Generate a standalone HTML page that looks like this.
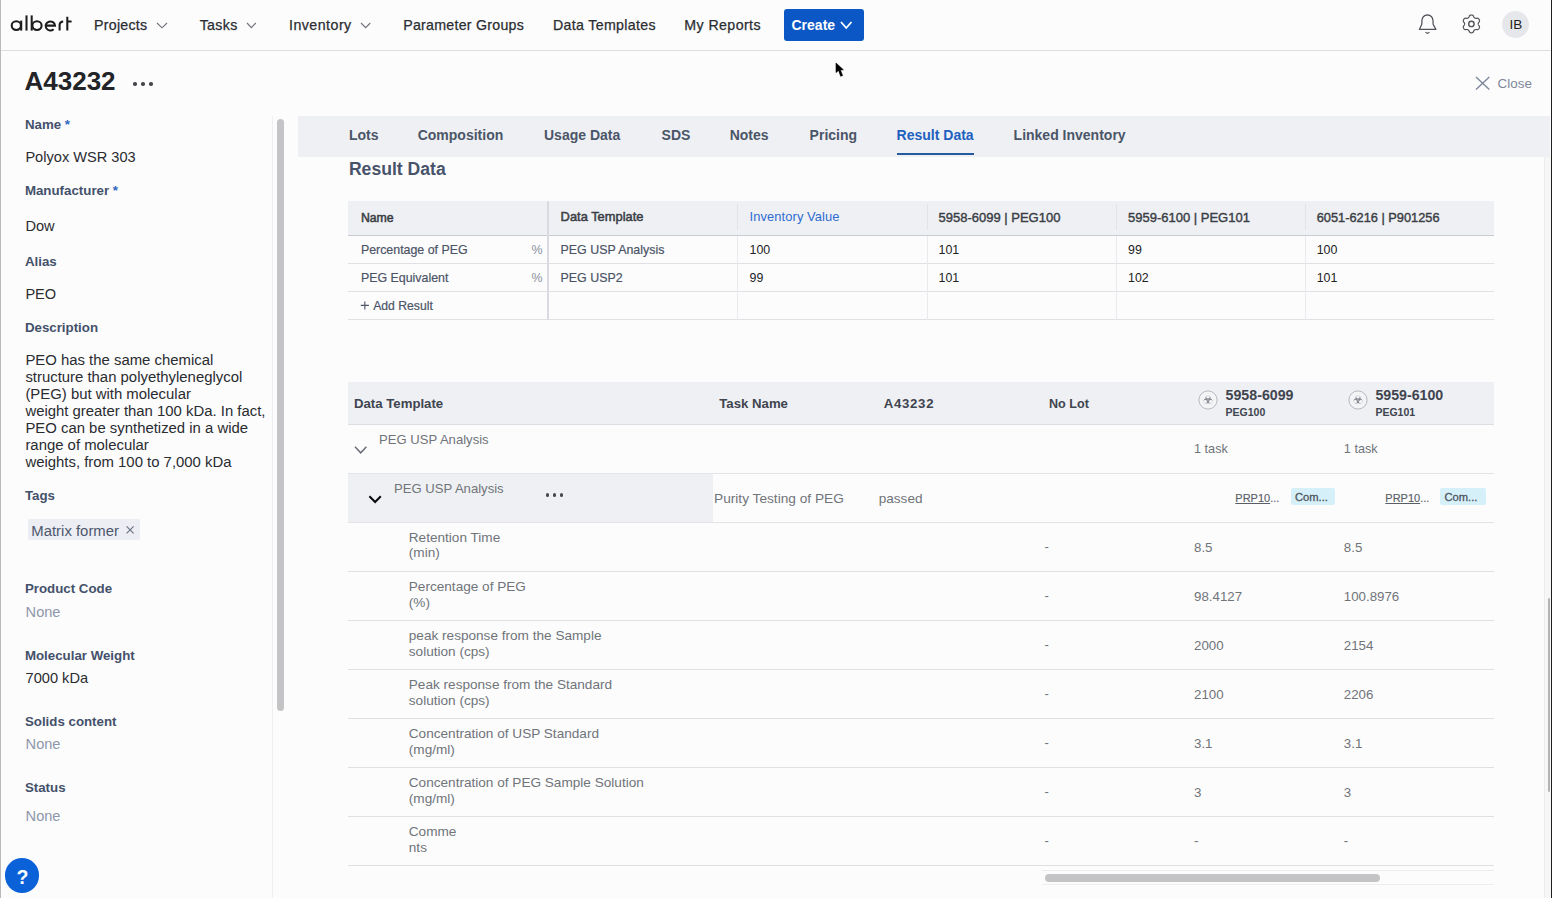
<!DOCTYPE html>
<html><head><meta charset="utf-8"><title>A43232</title>
<style>
html,body{margin:0;padding:0;}
body{width:1552px;height:898px;overflow:hidden;position:relative;background:#fcfcfd;font-family:"Liberation Sans",sans-serif;}
.t{position:absolute;white-space:pre;}
.r{position:absolute;}
</style></head><body>
<div class="r" style="left:0px;top:50px;width:1552px;height:1px;background:#dedfe2;"></div>
<svg class="r" style="left:0;top:0" width="90" height="50" viewBox="0 0 90 50">
<g fill="none" stroke="#1c1c1e" stroke-width="2.05">
<ellipse cx="16.3" cy="25.6" rx="4.6" ry="4.3"/>
<line x1="21.2" y1="20.6" x2="21.2" y2="30.6"/>
<line x1="26.5" y1="15.4" x2="26.5" y2="30.6"/>
<line x1="31.7" y1="15.4" x2="31.7" y2="30.6"/>
<ellipse cx="37.0" cy="25.6" rx="4.6" ry="4.3"/>
<path d="M45.6,25.6 L55.0,25.6 A4.7,4.5 0 1 0 53.6,29.2"/>
<path d="M59.6,30.6 L59.6,24.6 Q59.8,21.6 63.2,21.4"/>
<path d="M67.3,16.8 L67.3,30.6 M67.3,21.4 L71.6,21.4"/>
</g></svg>
<div class="t" style="left:94.00px;top:17.58px;font-size:14.2px;line-height:14.2px;color:#2b2d31;-webkit-text-stroke:0.25px #2b2d31;letter-spacing:0.27px">Projects</div>
<div class="t" style="left:199.70px;top:17.58px;font-size:14.2px;line-height:14.2px;color:#2b2d31;-webkit-text-stroke:0.25px #2b2d31;letter-spacing:0.34px">Tasks</div>
<div class="t" style="left:289.00px;top:17.58px;font-size:14.2px;line-height:14.2px;color:#2b2d31;-webkit-text-stroke:0.25px #2b2d31;letter-spacing:0.48px">Inventory</div>
<div class="t" style="left:403.20px;top:17.58px;font-size:14.2px;line-height:14.2px;color:#2b2d31;-webkit-text-stroke:0.25px #2b2d31;letter-spacing:0.26px">Parameter Groups</div>
<div class="t" style="left:553.00px;top:17.58px;font-size:14.2px;line-height:14.2px;color:#2b2d31;-webkit-text-stroke:0.25px #2b2d31;letter-spacing:0.33px">Data Templates</div>
<div class="t" style="left:684.30px;top:17.58px;font-size:14.2px;line-height:14.2px;color:#2b2d31;-webkit-text-stroke:0.25px #2b2d31;letter-spacing:0.41px">My Reports</div>
<svg class="r" style="left:154.6px;top:20.8px" width="14" height="8.8"><path d="M2,2 L7.0,6.8 L12,2" fill="none" stroke="#707278" stroke-width="1.15"/></svg>
<svg class="r" style="left:245.3px;top:20.8px" width="12.8" height="8.6"><path d="M2,2 L6.4,6.6 L10.8,2" fill="none" stroke="#707278" stroke-width="1.15"/></svg>
<svg class="r" style="left:359px;top:20.8px" width="13.3" height="8.6"><path d="M2,2 L6.65,6.6 L11.3,2" fill="none" stroke="#707278" stroke-width="1.15"/></svg>
<div class="r" style="left:783.5px;top:9px;width:80px;height:32px;background:#0c57c6;border-radius:3px"></div>
<div class="t" style="left:791.50px;top:18.35px;font-size:14px;line-height:14px;font-weight:700;color:#fff;">Create</div>
<svg class="r" style="left:838.5px;top:20px" width="14.5" height="10"><path d="M2,2 L7.25,8 L12.5,2" fill="none" stroke="#fff" stroke-width="1.8"/></svg>
<svg class="r" style="left:1412px;top:10px" width="30" height="28" viewBox="1412 10 30 28">
<path d="M1419.4,29.4 L1421.8,24.2 L1421.9,20.5 Q1422.5,15.2 1427.4,14.9 Q1432.4,15.2 1433,20.5 L1433.1,24.2 L1435.9,29.4 Z" fill="none" stroke="#505257" stroke-width="1.25" stroke-linejoin="round"/>
<path d="M1425.5,32.2 L1427.5,33.4 L1429.5,32.2" fill="none" stroke="#505257" stroke-width="1.2"/>
</svg>
<svg class="r" style="left:1458px;top:10px" width="28" height="28" viewBox="1458 10 28 28">
<path d="M1478.22,23.90 L1478.23,24.08 L1478.24,24.26 L1478.27,24.44 L1478.32,24.63 L1478.39,24.82 L1478.49,25.02 L1478.62,25.24 L1478.79,25.47 L1478.97,25.72 L1479.16,25.98 L1479.32,26.25 L1479.44,26.51 L1479.50,26.77 L1479.53,27.02 L1479.51,27.26 L1479.47,27.49 L1479.40,27.72 L1479.32,27.93 L1479.22,28.14 L1479.11,28.35 L1478.99,28.55 L1478.85,28.74 L1478.71,28.92 L1478.54,29.09 L1478.37,29.24 L1478.16,29.38 L1477.94,29.48 L1477.68,29.55 L1477.39,29.59 L1477.08,29.58 L1476.76,29.55 L1476.45,29.51 L1476.17,29.48 L1475.91,29.48 L1475.69,29.49 L1475.49,29.53 L1475.30,29.58 L1475.13,29.65 L1474.97,29.72 L1474.81,29.81 L1474.66,29.90 L1474.51,30.01 L1474.37,30.12 L1474.23,30.25 L1474.10,30.41 L1473.97,30.60 L1473.85,30.82 L1473.73,31.08 L1473.61,31.37 L1473.48,31.66 L1473.33,31.93 L1473.16,32.17 L1472.97,32.35 L1472.76,32.50 L1472.55,32.60 L1472.32,32.68 L1472.10,32.74 L1471.87,32.77 L1471.63,32.79 L1471.40,32.80 L1471.17,32.79 L1470.93,32.77 L1470.70,32.74 L1470.48,32.68 L1470.25,32.60 L1470.04,32.50 L1469.83,32.35 L1469.64,32.17 L1469.47,31.93 L1469.32,31.66 L1469.19,31.37 L1469.07,31.08 L1468.95,30.82 L1468.83,30.60 L1468.70,30.41 L1468.57,30.25 L1468.43,30.12 L1468.29,30.01 L1468.14,29.90 L1467.99,29.81 L1467.83,29.72 L1467.67,29.65 L1467.50,29.58 L1467.31,29.53 L1467.11,29.49 L1466.89,29.48 L1466.63,29.48 L1466.35,29.51 L1466.04,29.55 L1465.72,29.58 L1465.41,29.59 L1465.12,29.55 L1464.86,29.48 L1464.64,29.38 L1464.43,29.24 L1464.26,29.09 L1464.09,28.92 L1463.95,28.74 L1463.81,28.55 L1463.69,28.35 L1463.58,28.14 L1463.48,27.93 L1463.40,27.72 L1463.33,27.49 L1463.29,27.26 L1463.27,27.02 L1463.30,26.77 L1463.36,26.51 L1463.48,26.25 L1463.64,25.98 L1463.83,25.72 L1464.01,25.47 L1464.18,25.24 L1464.31,25.02 L1464.41,24.82 L1464.48,24.63 L1464.53,24.44 L1464.56,24.26 L1464.57,24.08 L1464.58,23.90 L1464.57,23.72 L1464.56,23.54 L1464.53,23.36 L1464.48,23.17 L1464.41,22.98 L1464.31,22.78 L1464.18,22.56 L1464.01,22.33 L1463.83,22.08 L1463.64,21.82 L1463.48,21.55 L1463.36,21.29 L1463.30,21.03 L1463.27,20.78 L1463.29,20.54 L1463.33,20.31 L1463.40,20.08 L1463.48,19.87 L1463.58,19.66 L1463.69,19.45 L1463.81,19.25 L1463.95,19.06 L1464.09,18.88 L1464.26,18.71 L1464.43,18.56 L1464.64,18.42 L1464.86,18.32 L1465.12,18.25 L1465.41,18.21 L1465.72,18.22 L1466.04,18.25 L1466.35,18.29 L1466.63,18.32 L1466.89,18.32 L1467.11,18.31 L1467.31,18.27 L1467.50,18.22 L1467.67,18.15 L1467.83,18.08 L1467.99,17.99 L1468.14,17.90 L1468.29,17.79 L1468.43,17.68 L1468.57,17.55 L1468.70,17.39 L1468.83,17.20 L1468.95,16.98 L1469.07,16.72 L1469.19,16.43 L1469.32,16.14 L1469.47,15.87 L1469.64,15.63 L1469.83,15.45 L1470.04,15.30 L1470.25,15.20 L1470.48,15.12 L1470.70,15.06 L1470.93,15.03 L1471.17,15.01 L1471.40,15.00 L1471.63,15.01 L1471.87,15.03 L1472.10,15.06 L1472.32,15.12 L1472.55,15.20 L1472.76,15.30 L1472.97,15.45 L1473.16,15.63 L1473.33,15.87 L1473.48,16.14 L1473.61,16.43 L1473.73,16.72 L1473.85,16.98 L1473.97,17.20 L1474.10,17.39 L1474.23,17.55 L1474.37,17.68 L1474.51,17.79 L1474.66,17.90 L1474.81,17.99 L1474.97,18.08 L1475.13,18.15 L1475.30,18.22 L1475.49,18.27 L1475.69,18.31 L1475.91,18.32 L1476.17,18.32 L1476.45,18.29 L1476.76,18.25 L1477.08,18.22 L1477.39,18.21 L1477.68,18.25 L1477.94,18.32 L1478.16,18.42 L1478.37,18.56 L1478.54,18.71 L1478.71,18.88 L1478.85,19.06 L1478.99,19.25 L1479.11,19.45 L1479.22,19.66 L1479.32,19.87 L1479.40,20.08 L1479.47,20.31 L1479.51,20.54 L1479.53,20.78 L1479.50,21.03 L1479.44,21.29 L1479.32,21.55 L1479.16,21.82 L1478.97,22.08 L1478.79,22.33 L1478.62,22.56 L1478.49,22.78 L1478.39,22.98 L1478.32,23.17 L1478.27,23.36 L1478.24,23.54 L1478.23,23.72Z" fill="none" stroke="#505257" stroke-width="1.2" stroke-linejoin="round"/>
<circle cx="1471.4" cy="23.9" r="2.7" fill="none" stroke="#505257" stroke-width="1.4"/>
</svg>
<div class="r" style="left:1502px;top:11.3px;width:27px;height:27px;background:#e6e7ea;border-radius:50%"></div>
<div class="t" style="left:1509.60px;top:18.37px;font-size:13.5px;line-height:13.5px;color:#1e1e20;">IB</div>
<div class="r" style="left:0px;top:0px;width:1px;height:898px;background:#b9b9bb;"></div>
<div class="r" style="left:1551px;top:0px;width:1px;height:898px;background:#1f1f1f;"></div>
<svg class="r" style="left:830px;top:58px" width="20" height="24" viewBox="830 58 20 24">
<path d="M836,63 L836,72.6 L838.5,70.4 L840.7,76.3 L842.6,75.5 L840.4,69.9 L843.4,69.8 Z" fill="#000" stroke="#000" stroke-width="0.6" stroke-linejoin="round"/>
</svg>
<div class="t" style="left:24.50px;top:68.19px;font-size:26px;line-height:26px;font-weight:700;color:#232427;">A43232</div>
<div class="r" style="left:133.3px;top:82.4px;width:3.6px;height:3.6px;background:#45474c;border-radius:50%"></div>
<div class="r" style="left:141.3px;top:82.4px;width:3.6px;height:3.6px;background:#45474c;border-radius:50%"></div>
<div class="r" style="left:149.3px;top:82.4px;width:3.6px;height:3.6px;background:#45474c;border-radius:50%"></div>
<svg class="r" style="left:1472px;top:74px" width="20" height="18" viewBox="1472 74 20 18">
<path d="M1476,77 L1489.3,89.5 M1489.3,77 L1476,89.5" stroke="#7e879a" stroke-width="1.4" fill="none"/></svg>
<div class="t" style="left:1497.60px;top:76.96px;font-size:13.4px;line-height:13.4px;color:#7e879a;">Close</div>
<div class="t" style="left:24.90px;top:117.64px;font-size:13.3px;line-height:13.3px;font-weight:700;color:#44516a;">Name <span style="color:#2f66bf">*</span></div>
<div class="t" style="left:25.40px;top:149.64px;font-size:14.6px;line-height:14.6px;color:#2a2c30;">Polyox WSR 303</div>
<div class="t" style="left:24.90px;top:183.94px;font-size:13.3px;line-height:13.3px;font-weight:700;color:#44516a;">Manufacturer <span style="color:#2f66bf">*</span></div>
<div class="t" style="left:25.40px;top:218.64px;font-size:14.6px;line-height:14.6px;color:#2a2c30;">Dow</div>
<div class="t" style="left:24.90px;top:255.04px;font-size:13.3px;line-height:13.3px;font-weight:700;color:#44516a;">Alias</div>
<div class="t" style="left:25.40px;top:286.84px;font-size:14.6px;line-height:14.6px;color:#2a2c30;">PEO</div>
<div class="t" style="left:24.90px;top:320.74px;font-size:13.3px;line-height:13.3px;font-weight:700;color:#44516a;">Description</div>
<div class="t" style="left:25.40px;top:352.79px;font-size:14.9px;line-height:14.9px;color:#2a2c30;">PEO has the same chemical</div>
<div class="t" style="left:25.40px;top:369.81px;font-size:14.9px;line-height:14.9px;color:#2a2c30;">structure than polyethyleneglycol</div>
<div class="t" style="left:25.40px;top:386.83px;font-size:14.9px;line-height:14.9px;color:#2a2c30;">(PEG) but with molecular</div>
<div class="t" style="left:25.40px;top:403.85px;font-size:14.9px;line-height:14.9px;color:#2a2c30;">weight greater than 100 kDa. In fact,</div>
<div class="t" style="left:25.40px;top:420.87px;font-size:14.9px;line-height:14.9px;color:#2a2c30;">PEO can be synthetized in a wide</div>
<div class="t" style="left:25.40px;top:437.89px;font-size:14.9px;line-height:14.9px;color:#2a2c30;">range of molecular</div>
<div class="t" style="left:25.40px;top:454.91px;font-size:14.9px;line-height:14.9px;color:#2a2c30;">weights, from 100 to 7,000 kDa</div>
<div class="t" style="left:24.90px;top:488.74px;font-size:13.3px;line-height:13.3px;font-weight:700;color:#44516a;">Tags</div>
<div class="r" style="left:27.5px;top:519.2px;width:112.5px;height:21.2px;background:#eceef3;border-radius:2px"></div>
<div class="t" style="left:31.30px;top:524.19px;font-size:14.9px;line-height:14.9px;color:#4e586e;">Matrix former</div>
<svg class="r" style="left:125px;top:522px" width="12" height="14" viewBox="125 522 12 14">
<path d="M126.6,526.3 L133.6,533.3 M133.6,526.3 L126.6,533.3" stroke="#6d7588" stroke-width="1.2" fill="none"/></svg>
<div class="t" style="left:24.90px;top:582.44px;font-size:13.3px;line-height:13.3px;font-weight:700;color:#44516a;">Product Code</div>
<div class="t" style="left:25.60px;top:605.14px;font-size:14.6px;line-height:14.6px;color:#8e97a9;">None</div>
<div class="t" style="left:24.90px;top:648.94px;font-size:13.3px;line-height:13.3px;font-weight:700;color:#44516a;">Molecular Weight</div>
<div class="t" style="left:25.60px;top:670.94px;font-size:14.6px;line-height:14.6px;color:#2a2c30;">7000 kDa</div>
<div class="t" style="left:24.90px;top:715.14px;font-size:13.3px;line-height:13.3px;font-weight:700;color:#44516a;">Solids content</div>
<div class="t" style="left:25.60px;top:736.64px;font-size:14.6px;line-height:14.6px;color:#8e97a9;">None</div>
<div class="t" style="left:24.90px;top:780.74px;font-size:13.3px;line-height:13.3px;font-weight:700;color:#44516a;">Status</div>
<div class="t" style="left:25.60px;top:809.04px;font-size:14.6px;line-height:14.6px;color:#8e97a9;">None</div>
<div class="r" style="left:272px;top:116px;width:1px;height:782px;background:#eeeff1;"></div>
<div class="r" style="left:276.8px;top:119px;width:7.6px;height:592px;background:#c4c4c6;border-radius:4px"></div>
<div class="r" style="left:4.6px;top:858px;width:34.8px;height:34.6px;background:#0b62d8;border-radius:50%"></div>
<div class="t" style="left:16.40px;top:867.69px;font-size:19.5px;line-height:19.5px;font-weight:700;color:#fff;">?</div>
<div class="r" style="left:298px;top:115.8px;width:1252px;height:41.3px;background:#eef0f4;"></div>
<div class="t" style="left:348.90px;top:127.75px;font-size:14px;line-height:14px;font-weight:700;color:#4b5568;">Lots</div>
<div class="t" style="left:417.70px;top:127.75px;font-size:14px;line-height:14px;font-weight:700;color:#4b5568;">Composition</div>
<div class="t" style="left:544.00px;top:127.75px;font-size:14px;line-height:14px;font-weight:700;color:#4b5568;">Usage Data</div>
<div class="t" style="left:661.60px;top:127.75px;font-size:14px;line-height:14px;font-weight:700;color:#4b5568;">SDS</div>
<div class="t" style="left:729.70px;top:127.75px;font-size:14px;line-height:14px;font-weight:700;color:#4b5568;">Notes</div>
<div class="t" style="left:809.60px;top:127.75px;font-size:14px;line-height:14px;font-weight:700;color:#4b5568;">Pricing</div>
<div class="t" style="left:1013.60px;top:127.75px;font-size:14px;line-height:14px;font-weight:700;color:#4b5568;">Linked Inventory</div>
<div class="t" style="left:896.60px;top:127.75px;font-size:14px;line-height:14px;font-weight:700;color:#1e60c0;">Result Data</div>
<div class="r" style="left:896.6px;top:152.8px;width:77px;height:2.2px;background:#245a9e;"></div>
<div class="r" style="left:1544.5px;top:157px;width:6px;height:741px;background:#f6f6f7;"></div>
<div class="r" style="left:1544px;top:157px;width:1px;height:741px;background:#ebecee;"></div>
<div class="t" style="left:348.90px;top:161.40px;font-size:17.6px;line-height:17.6px;font-weight:700;color:#48536a;">Result Data</div>
<div class="r" style="left:348px;top:200.5px;width:1146px;height:35px;background:#eef0f4;"></div>
<div class="r" style="left:348px;top:235px;width:1146px;height:1.2px;background:#c9ccd3;"></div>
<div class="r" style="left:348px;top:263.3px;width:1146px;height:1px;background:#dfe1e5;"></div>
<div class="r" style="left:348px;top:291.3px;width:1146px;height:1px;background:#dfe1e5;"></div>
<div class="r" style="left:348px;top:319.4px;width:1146px;height:1px;background:#dfe1e5;"></div>
<div class="r" style="left:547.2px;top:200.5px;width:1.5px;height:119px;background:#d9dbe0;"></div>
<div class="r" style="left:737.2px;top:204px;width:1px;height:26px;background:#e1e3e8;"></div>
<div class="r" style="left:737.2px;top:236px;width:1px;height:84px;background:#e9eaee;"></div>
<div class="r" style="left:926.6px;top:204px;width:1px;height:26px;background:#e1e3e8;"></div>
<div class="r" style="left:926.6px;top:236px;width:1px;height:84px;background:#e9eaee;"></div>
<div class="r" style="left:1116px;top:204px;width:1px;height:26px;background:#e1e3e8;"></div>
<div class="r" style="left:1116px;top:236px;width:1px;height:84px;background:#e9eaee;"></div>
<div class="r" style="left:1304.6px;top:204px;width:1px;height:26px;background:#e1e3e8;"></div>
<div class="r" style="left:1304.6px;top:236px;width:1px;height:84px;background:#e9eaee;"></div>
<div class="t" style="left:360.90px;top:211.99px;font-size:12.3px;line-height:12.3px;color:#3a3d44;-webkit-text-stroke:0.5px #3a3d44;">Name</div>
<div class="t" style="left:560.60px;top:211.48px;font-size:12.9px;line-height:12.9px;color:#3a3d44;-webkit-text-stroke:0.5px #3a3d44;">Data Template</div>
<div class="t" style="left:749.50px;top:211.48px;font-size:12.9px;line-height:12.9px;color:#2e6cd0;letter-spacing:0.1px">Inventory Value</div>
<div class="t" style="left:938.50px;top:211.40px;font-size:13px;line-height:13px;color:#3a3d44;-webkit-text-stroke:0.4px #3a3d44;">5958-6099 | PEG100</div>
<div class="t" style="left:1128.00px;top:211.40px;font-size:13px;line-height:13px;color:#3a3d44;-webkit-text-stroke:0.4px #3a3d44;">5959-6100 | PEG101</div>
<div class="t" style="left:1316.70px;top:211.56px;font-size:12.8px;line-height:12.8px;color:#3a3d44;-webkit-text-stroke:0.4px #3a3d44;">6051-6216 | P901256</div>
<div class="t" style="left:360.90px;top:243.50px;font-size:12.4px;line-height:12.4px;color:#4b5466;-webkit-text-stroke:0.2px #4b5466;">Percentage of PEG</div>
<div class="t" style="left:531.60px;top:243.50px;font-size:12.4px;line-height:12.4px;color:#8a909c;">%</div>
<div class="t" style="left:560.60px;top:243.50px;font-size:12.4px;line-height:12.4px;color:#4b5466;-webkit-text-stroke:0.2px #4b5466;">PEG USP Analysis</div>
<div class="t" style="left:749.50px;top:243.50px;font-size:12.4px;line-height:12.4px;color:#222;">100</div>
<div class="t" style="left:938.50px;top:243.50px;font-size:12.4px;line-height:12.4px;color:#222;">101</div>
<div class="t" style="left:1128.00px;top:243.50px;font-size:12.4px;line-height:12.4px;color:#222;">99</div>
<div class="t" style="left:1316.70px;top:243.50px;font-size:12.4px;line-height:12.4px;color:#222;">100</div>
<div class="t" style="left:360.90px;top:271.50px;font-size:12.4px;line-height:12.4px;color:#4b5466;-webkit-text-stroke:0.2px #4b5466;">PEG Equivalent</div>
<div class="t" style="left:531.60px;top:271.50px;font-size:12.4px;line-height:12.4px;color:#8a909c;">%</div>
<div class="t" style="left:560.60px;top:271.50px;font-size:12.4px;line-height:12.4px;color:#4b5466;-webkit-text-stroke:0.2px #4b5466;">PEG USP2</div>
<div class="t" style="left:749.50px;top:271.50px;font-size:12.4px;line-height:12.4px;color:#222;">99</div>
<div class="t" style="left:938.50px;top:271.50px;font-size:12.4px;line-height:12.4px;color:#222;">101</div>
<div class="t" style="left:1128.00px;top:271.50px;font-size:12.4px;line-height:12.4px;color:#222;">102</div>
<div class="t" style="left:1316.70px;top:271.50px;font-size:12.4px;line-height:12.4px;color:#222;">101</div>
<svg class="r" style="left:359px;top:300px" width="12" height="12" viewBox="359 300 12 12"><path d="M360.8,305.4 L368.9,305.4 M364.85,301.4 L364.85,309.4" stroke="#4b5466" stroke-width="1.1" fill="none"/></svg>
<div class="t" style="left:373.20px;top:299.67px;font-size:12.2px;line-height:12.2px;color:#4b5466;-webkit-text-stroke:0.2px #4b5466;">Add Result</div>
<div class="r" style="left:348px;top:382.4px;width:1146px;height:41.8px;background:#eef0f4;"></div>
<div class="r" style="left:348px;top:423.8px;width:1146px;height:1px;background:#dcdee3;"></div>
<div class="t" style="left:354.00px;top:397.33px;font-size:13.2px;line-height:13.2px;font-weight:700;color:#40444e;">Data Template</div>
<div class="t" style="left:719.30px;top:397.33px;font-size:13.2px;line-height:13.2px;font-weight:700;color:#40444e;">Task Name</div>
<div class="t" style="left:883.80px;top:397.33px;font-size:13.2px;line-height:13.2px;font-weight:700;color:#40444e;letter-spacing:0.7px">A43232</div>
<div class="t" style="left:1049.00px;top:397.83px;font-size:12.6px;line-height:12.6px;font-weight:700;color:#40444e;">No Lot</div>
<svg class="r" style="left:1197px;top:388.5px" width="22" height="22" viewBox="-11 -11 22 22">
<defs><mask id="bm1"><circle cx="0.00" cy="-2.10" r="2.5" fill="#fff"/><circle cx="1.82" cy="1.05" r="2.5" fill="#fff"/><circle cx="-1.82" cy="1.05" r="2.5" fill="#fff"/><circle cx="0.00" cy="-2.90" r="1.8" fill="#000"/><circle cx="2.51" cy="1.45" r="1.8" fill="#000"/><circle cx="-2.51" cy="1.45" r="1.8" fill="#000"/><circle cx="0" cy="0" r="0.7" fill="#000"/></mask></defs>
<circle cx="0" cy="0" r="9.1" fill="#f3f4f6" stroke="#b5b8be" stroke-width="1"/>
<rect x="-6" y="-6" width="12" height="12" fill="#7d8189" mask="url(#bm1)"/>
<circle cx="0" cy="0" r="1.5" fill="none" stroke="#7d8189" stroke-width="0.6"/>
</svg>
<svg class="r" style="left:1346.8px;top:388.5px" width="22" height="22" viewBox="-11 -11 22 22">
<defs><mask id="bm2"><circle cx="0.00" cy="-2.10" r="2.5" fill="#fff"/><circle cx="1.82" cy="1.05" r="2.5" fill="#fff"/><circle cx="-1.82" cy="1.05" r="2.5" fill="#fff"/><circle cx="0.00" cy="-2.90" r="1.8" fill="#000"/><circle cx="2.51" cy="1.45" r="1.8" fill="#000"/><circle cx="-2.51" cy="1.45" r="1.8" fill="#000"/><circle cx="0" cy="0" r="0.7" fill="#000"/></mask></defs>
<circle cx="0" cy="0" r="9.1" fill="#f3f4f6" stroke="#b5b8be" stroke-width="1"/>
<rect x="-6" y="-6" width="12" height="12" fill="#7d8189" mask="url(#bm2)"/>
<circle cx="0" cy="0" r="1.5" fill="none" stroke="#7d8189" stroke-width="0.6"/>
</svg>
<div class="t" style="left:1225.60px;top:387.78px;font-size:14.2px;line-height:14.2px;font-weight:700;color:#40444e;">5958-6099</div>
<div class="t" style="left:1225.60px;top:407.11px;font-size:10.5px;line-height:10.5px;font-weight:700;color:#40444e;">PEG100</div>
<div class="t" style="left:1375.40px;top:387.78px;font-size:14.2px;line-height:14.2px;font-weight:700;color:#40444e;">5959-6100</div>
<div class="t" style="left:1375.40px;top:407.11px;font-size:10.5px;line-height:10.5px;font-weight:700;color:#40444e;">PEG101</div>
<svg class="r" style="left:352px;top:444px" width="18" height="12" viewBox="352 444 18 12">
<path d="M355,446.8 L360.7,452.8 L366.4,446.8" fill="none" stroke="#6a6e75" stroke-width="1.5"/></svg>
<div class="t" style="left:379.00px;top:432.91px;font-size:13.1px;line-height:13.1px;color:#707479;">PEG USP Analysis</div>
<div class="t" style="left:1194.00px;top:442.55px;font-size:12.7px;line-height:12.7px;color:#707479;">1 task</div>
<div class="t" style="left:1343.80px;top:442.55px;font-size:12.7px;line-height:12.7px;color:#707479;">1 task</div>
<div class="r" style="left:348px;top:472.5px;width:1146px;height:1px;background:#e3e4e8;"></div>
<div class="r" style="left:348px;top:473.5px;width:365px;height:49px;background:#eff0f3;"></div>
<svg class="r" style="left:366px;top:492px" width="18" height="14" viewBox="366 492 18 14">
<path d="M369.4,496.2 L375.1,502 L380.8,496.2" fill="none" stroke="#0a0a0a" stroke-width="2"/></svg>
<div class="t" style="left:394.00px;top:481.91px;font-size:13.1px;line-height:13.1px;color:#707479;">PEG USP Analysis</div>
<div class="r" style="left:545.6px;top:493.4px;width:3.2px;height:3.2px;background:#48494d;border-radius:50%"></div>
<div class="r" style="left:552.85px;top:493.4px;width:3.2px;height:3.2px;background:#48494d;border-radius:50%"></div>
<div class="r" style="left:560.1px;top:493.4px;width:3.2px;height:3.2px;background:#48494d;border-radius:50%"></div>
<div class="t" style="left:714.00px;top:491.80px;font-size:13.7px;line-height:13.7px;color:#707479;">Purity Testing of PEG</div>
<div class="t" style="left:878.70px;top:491.89px;font-size:13.6px;line-height:13.6px;color:#707479;">passed</div>
<div class="t" style="left:1235.30px;top:493.29px;font-size:11px;line-height:11px;color:#5a5e66;-webkit-text-stroke:0.15px #5a5e66;"><u>PRP10</u>...</div>
<div class="r" style="left:1290.8px;top:488.2px;width:44.7px;height:16.8px;background:#d6f0f9;border-radius:2px"></div>
<div class="t" style="left:1295.00px;top:492.02px;font-size:11.2px;line-height:11.2px;color:#4f555e;-webkit-text-stroke:0.3px #4f555e;">Com...</div>
<div class="t" style="left:1385.30px;top:493.29px;font-size:11px;line-height:11px;color:#5a5e66;-webkit-text-stroke:0.15px #5a5e66;"><u>PRP10</u>...</div>
<div class="r" style="left:1439.8px;top:488.2px;width:46px;height:16.8px;background:#d6f0f9;border-radius:2px"></div>
<div class="t" style="left:1444.50px;top:492.02px;font-size:11.2px;line-height:11.2px;color:#4f555e;-webkit-text-stroke:0.3px #4f555e;">Com...</div>
<div class="r" style="left:348px;top:522.2px;width:1146px;height:1px;background:#e3e4e8;"></div>
<div class="t" style="left:408.80px;top:530.69px;font-size:13.6px;line-height:13.6px;color:#707479;">Retention Time</div>
<div class="t" style="left:408.80px;top:546.49px;font-size:13.6px;line-height:13.6px;color:#707479;">(min)</div>
<div class="t" style="left:1044.50px;top:540.10px;font-size:13px;line-height:13px;color:#707479;">-</div>
<div class="t" style="left:1194.00px;top:540.64px;font-size:13.3px;line-height:13.3px;color:#707479;">8.5</div>
<div class="t" style="left:1343.80px;top:540.64px;font-size:13.3px;line-height:13.3px;color:#707479;">8.5</div>
<div class="r" style="left:348px;top:571.0px;width:1146px;height:1px;background:#dfe0e4;"></div>
<div class="t" style="left:408.80px;top:579.74px;font-size:13.6px;line-height:13.6px;color:#707479;">Percentage of PEG</div>
<div class="t" style="left:408.80px;top:595.54px;font-size:13.6px;line-height:13.6px;color:#707479;">(%)</div>
<div class="t" style="left:1044.50px;top:589.15px;font-size:13px;line-height:13px;color:#707479;">-</div>
<div class="t" style="left:1194.00px;top:589.69px;font-size:13.3px;line-height:13.3px;color:#707479;">98.4127</div>
<div class="t" style="left:1343.80px;top:589.69px;font-size:13.3px;line-height:13.3px;color:#707479;">100.8976</div>
<div class="r" style="left:348px;top:620.05px;width:1146px;height:1px;background:#dfe0e4;"></div>
<div class="t" style="left:408.80px;top:628.79px;font-size:13.6px;line-height:13.6px;color:#707479;">peak response from the Sample</div>
<div class="t" style="left:408.80px;top:644.59px;font-size:13.6px;line-height:13.6px;color:#707479;">solution (cps)</div>
<div class="t" style="left:1044.50px;top:638.20px;font-size:13px;line-height:13px;color:#707479;">-</div>
<div class="t" style="left:1194.00px;top:638.74px;font-size:13.3px;line-height:13.3px;color:#707479;">2000</div>
<div class="t" style="left:1343.80px;top:638.74px;font-size:13.3px;line-height:13.3px;color:#707479;">2154</div>
<div class="r" style="left:348px;top:669.1px;width:1146px;height:1px;background:#dfe0e4;"></div>
<div class="t" style="left:408.80px;top:677.84px;font-size:13.6px;line-height:13.6px;color:#707479;">Peak response from the Standard</div>
<div class="t" style="left:408.80px;top:693.64px;font-size:13.6px;line-height:13.6px;color:#707479;">solution (cps)</div>
<div class="t" style="left:1044.50px;top:687.25px;font-size:13px;line-height:13px;color:#707479;">-</div>
<div class="t" style="left:1194.00px;top:687.79px;font-size:13.3px;line-height:13.3px;color:#707479;">2100</div>
<div class="t" style="left:1343.80px;top:687.79px;font-size:13.3px;line-height:13.3px;color:#707479;">2206</div>
<div class="r" style="left:348px;top:718.15px;width:1146px;height:1px;background:#dfe0e4;"></div>
<div class="t" style="left:408.80px;top:726.89px;font-size:13.6px;line-height:13.6px;color:#707479;">Concentration of USP Standard</div>
<div class="t" style="left:408.80px;top:742.69px;font-size:13.6px;line-height:13.6px;color:#707479;">(mg/ml)</div>
<div class="t" style="left:1044.50px;top:736.30px;font-size:13px;line-height:13px;color:#707479;">-</div>
<div class="t" style="left:1194.00px;top:736.84px;font-size:13.3px;line-height:13.3px;color:#707479;">3.1</div>
<div class="t" style="left:1343.80px;top:736.84px;font-size:13.3px;line-height:13.3px;color:#707479;">3.1</div>
<div class="r" style="left:348px;top:767.1999999999999px;width:1146px;height:1px;background:#dfe0e4;"></div>
<div class="t" style="left:408.80px;top:775.94px;font-size:13.6px;line-height:13.6px;color:#707479;">Concentration of PEG Sample Solution</div>
<div class="t" style="left:408.80px;top:791.74px;font-size:13.6px;line-height:13.6px;color:#707479;">(mg/ml)</div>
<div class="t" style="left:1044.50px;top:785.35px;font-size:13px;line-height:13px;color:#707479;">-</div>
<div class="t" style="left:1194.00px;top:785.89px;font-size:13.3px;line-height:13.3px;color:#707479;">3</div>
<div class="t" style="left:1343.80px;top:785.89px;font-size:13.3px;line-height:13.3px;color:#707479;">3</div>
<div class="r" style="left:348px;top:816.25px;width:1146px;height:1px;background:#dfe0e4;"></div>
<div class="t" style="left:408.80px;top:824.99px;font-size:13.6px;line-height:13.6px;color:#707479;">Comme</div>
<div class="t" style="left:408.80px;top:840.79px;font-size:13.6px;line-height:13.6px;color:#707479;">nts</div>
<div class="t" style="left:1044.50px;top:834.40px;font-size:13px;line-height:13px;color:#707479;">-</div>
<div class="t" style="left:1194.00px;top:834.14px;font-size:13.3px;line-height:13.3px;color:#707479;">-</div>
<div class="t" style="left:1343.80px;top:834.14px;font-size:13.3px;line-height:13.3px;color:#707479;">-</div>
<div class="r" style="left:348px;top:865.3px;width:1146px;height:1px;background:#dfe0e4;"></div>
<div class="r" style="left:1042px;top:870px;width:452px;height:1px;background:#ebebed;"></div>
<div class="r" style="left:1042px;top:884px;width:452px;height:1px;background:#eeeeef;"></div>
<div class="r" style="left:1044.5px;top:874.4px;width:335.5px;height:7.8px;background:#c4c4c6;border-radius:4px"></div>
<div class="r" style="left:1547.8px;top:597.7px;width:2.6px;height:194.5px;background:#b4b4b6;border-radius:1px"></div>
</body></html>
